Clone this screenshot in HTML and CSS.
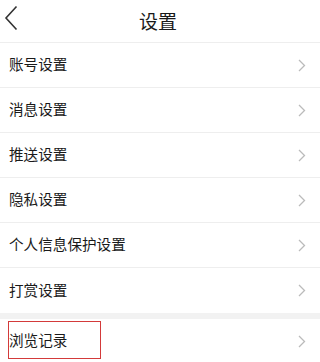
FILE: index.html
```html
<!DOCTYPE html>
<html lang="zh">
<head>
<meta charset="utf-8">
<link rel="stylesheet" href="styles.css">
</head>
<body>
<div class="page">
  <header class="bar">
    <svg class="back" width="14" height="26" viewBox="0 0 14 26"><path d="M12.5 1.5 L2 13 L12.5 24.5" fill="none" stroke="#333" stroke-width="1.6"/></svg>
    <div class="title">设置</div>
  </header>
  <ul class="list">
    <li class="row"><span>账号设置</span><svg class="chev" width="8" height="13" viewBox="0 0 8 13"><path d="M1 1 L6.5 6.5 L1 12" fill="none" stroke="#bbb" stroke-width="1.3"/></svg></li>
    <li class="row"><span>消息设置</span><svg class="chev" width="8" height="13" viewBox="0 0 8 13"><path d="M1 1 L6.5 6.5 L1 12" fill="none" stroke="#bbb" stroke-width="1.3"/></svg></li>
    <li class="row"><span>推送设置</span><svg class="chev" width="8" height="13" viewBox="0 0 8 13"><path d="M1 1 L6.5 6.5 L1 12" fill="none" stroke="#bbb" stroke-width="1.3"/></svg></li>
    <li class="row"><span>隐私设置</span><svg class="chev" width="8" height="13" viewBox="0 0 8 13"><path d="M1 1 L6.5 6.5 L1 12" fill="none" stroke="#bbb" stroke-width="1.3"/></svg></li>
    <li class="row"><span>个人信息保护设置</span><svg class="chev" width="8" height="13" viewBox="0 0 8 13"><path d="M1 1 L6.5 6.5 L1 12" fill="none" stroke="#bbb" stroke-width="1.3"/></svg></li>
    <li class="row"><span>打赏设置</span><svg class="chev" width="8" height="13" viewBox="0 0 8 13"><path d="M1 1 L6.5 6.5 L1 12" fill="none" stroke="#bbb" stroke-width="1.3"/></svg></li>
  </ul>
  <div class="gap"></div>
  <ul class="list">
    <li class="row last"><span>浏览记录</span><svg class="chev" width="8" height="13" viewBox="0 0 8 13"><path d="M1 1 L6.5 6.5 L1 12" fill="none" stroke="#bbb" stroke-width="1.3"/></svg><div class="mark"></div></li>
  </ul>
</div>
</body>
</html>
```
FILE: styles.css
```css
* { box-sizing: border-box; }
html, body { margin: 0; padding: 0; background: #fff; }
body { font-family: "Noto Sans CJK SC", "Noto Sans", sans-serif; color: #1a1a1a; }
.page { width: 320px; height: 362px; overflow: hidden; }
.bar {
  height: 43px;
  display: flex;
  align-items: center;
  justify-content: center;
  position: relative;
  border-bottom: 1px solid #eeeeee;
}
.back { position: absolute; left: 4px; top: 5px; }
.title { font-size: 19px; color: #1a1a1a; line-height: 1; margin-top: -2px; margin-left: -4px; }
.list { list-style: none; margin: 0; padding: 0; }
.row {
  height: 45px;
  display: flex;
  align-items: center;
  justify-content: space-between;
  padding: 0 14px 0 9px;
  font-size: 14.6px;
  border-bottom: 1px solid #eeeeee;
  position: relative;
}
.row:last-child { border-bottom: none; }
.row span { line-height: 1; margin-top: -1px; }
.gap { height: 6px; background: #f2f2f2; }
.row.last { height: 44px; }
.mark {
  position: absolute;
  left: 8px;
  top: 2px;
  width: 93px;
  height: 38px;
  border: 1px solid #d33a3a;
}
```
